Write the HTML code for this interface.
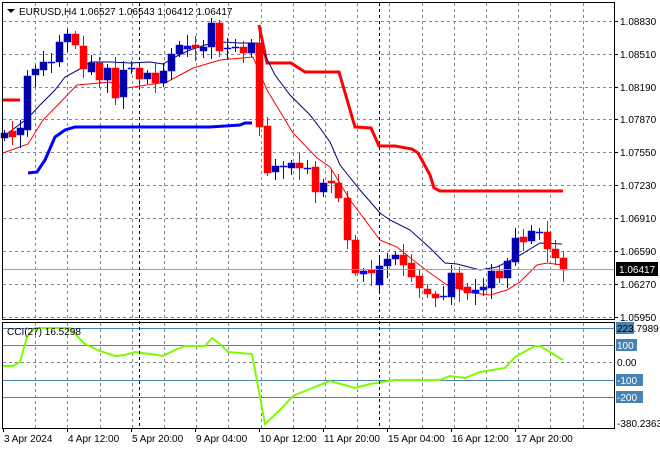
<!DOCTYPE html>
<html><head><meta charset="utf-8"><style>
html,body{margin:0;padding:0;background:#fff;width:660px;height:450px;overflow:hidden}
svg{display:block;font-family:"Liberation Sans",sans-serif}
</style></head><body>
<svg id="s" width="660" height="450" xmlns="http://www.w3.org/2000/svg">
<rect width="660" height="450" fill="#fff"/>
<g id="grid" stroke="#7a8896" stroke-dasharray="3,3" stroke-width="1"></g>
<g id="cci" fill="none"></g>
<g id="ind" fill="none"></g>
<g id="cand"></g>
<line x1="3" y1="269.5" x2="614" y2="269.5" stroke="#a0a0a0"/>
<line x1="139.5" y1="3" x2="139.5" y2="428" stroke="#000" stroke-dasharray="3,3"/>
<line x1="379.5" y1="3" x2="379.5" y2="428" stroke="#000" stroke-dasharray="3,3"/>
<rect x="2.5" y="2.5" width="612" height="317" fill="none" stroke="#000"/>
<rect x="2.5" y="322.5" width="612" height="106" fill="none" stroke="#000"/>
<g id="lab" font-size="10" fill="#000"></g>
<polygon points="7,9 15,9 11,13" fill="#000"/>
<text x="19" y="15" font-size="10">EURUSD,H4  1.06527 1.06543 1.06412 1.06417</text>
<text x="7" y="335" font-size="10">CCI(27) 16.5298</text>
</svg>
<script>
var NS="http://www.w3.org/2000/svg";
function el(p,t,a,txt){var e=document.createElementNS(NS,t);for(var k in a)e.setAttribute(k,a[k]);if(txt!=null)e.textContent=txt;document.getElementById(p).appendChild(e);return e;}
var ys=[21,54,87,119,152,185,218,251,284,317];
ys.forEach(function(y){el('grid','line',{x1:3,y1:y+.5,x2:614,y2:y+.5});});
for(var k=1;k<19;k++){var x=Math.round(3+32.2*k)+.5;el('grid','line',{x1:x,y1:3,x2:x,y2:320});el('grid','line',{x1:x,y1:323,x2:x,y2:428});}
el('grid','line',{x1:3,y1:362.5,x2:614,y2:362.5});
[328,345,380,397].forEach(function(y){el('cci','line',{x1:3,y1:y+.5,x2:614,y2:y+.5,stroke:'#4682b4'});});
function pl(g,pts,c,w){el(g,'polyline',{points:pts,stroke:c,'stroke-width':w,fill:'none'});}
pl('cci',"3,366 13,366 20,362 27,337 35,328 70,328 78,337 85,344 100,351 115,356 125,355 135,352 150,354 163,356 175,350 185,346 205,346 212,338 220,344 228,352 240,353 252,354 265,424 280,410 293,396 300,393 330,381 355,388 370,384 395,380 440,380 450,376 465,378 480,372 505,368 515,357 535,346 540,346 563,360","#7cfc00",2);
pl('ind',"3,100 20,100","#ff0000",3);
pl('ind',"259,25 267,63 291,63 305,72 339,72 355,127 371,128 379,146 395,146 412,149 418,153 423,162 430,175 434,188 440,191 563,191","#ff0000",3);
pl('ind',"28,173 37,172 45,160 55,137 65,130 75,127 210,127 240,125 245,123 252,123","#0000ff",3);
pl('ind',"3,137 28,118 40,105 55,90 65,77 80,69 90,62 110,62 130,63 150,62 163,64 175,57 190,50 205,45 220,42 240,43 258,43 265,55 275,75 290,95 310,115 320,128 330,142 340,165 360,190 380,213 390,220 410,230 430,248 445,263 457,264 480,270 497,267 517,257 540,243 562,244","#000080",1);
pl('ind',"3,153 28,144 43,120 77,85 110,82 127,88 167,82 193,68 220,60 253,57 267,90 293,133 317,158 330,167 350,200 380,240 397,247 413,260 430,273 447,285 473,293 490,295 507,290 520,282 537,265 547,263 562,265","#ff0000",1);
var C=[[4,138,133],[12,131,137],[20,135,128],[27,130,76],[35,75,69],[43,70,62],[51,62,62],[59,62,42],[67,42,34],[75,34,45],[83,46,69],[91,72,63],[99,63,80],[107,80,68],[115,68,98],[123,97,70],[131,68,68],[139,68,79],[147,79,73],[155,73,83],[163,83,71],[171,71,54],[179,54,45],[187,49,46],[195,45,48],[203,51,47],[211,47,23],[219,23,51],[227,48,48],[235,47,47],[243,47,53],[251,53,43],[259,43,127],[267,126,173],[275,172,166],[283,166,166],[291,168,163],[299,163,168],[307,168,168],[315,167,192],[323,192,183],[331,181,183],[338,183,198],[347,198,240],[355,240,273],[363,274,271],[371,270,273],[379,285,266],[387,266,259],[395,259,255],[403,255,265],[411,263,277],[419,276,288],[427,289,294],[435,294,298],[443,297,296],[451,297,273],[459,273,289],[467,287,293],[475,293,290],[483,290,287],[491,288,271],[499,271,278],[507,278,261],[515,262,238],[523,237,242],[531,241,231],[539,232,232],[547,232,249],[555,249,258],[563,258,270]];
C.forEach(function(c,i){var x=c[0],o=c[1],cl=c[2];var up=cl<=o;var col=up?'#0000a0':'#ff0000';if(up&&Math.abs(o-cl)<4)col='#0000ff';
var top=Math.min(o,cl),bot=Math.max(o,cl);var h=(i*7)%9+3,l=(i*5)%11+3;
el('cand','line',{x1:x+.5,y1:top-h,x2:x+.5,y2:bot+l,stroke:col});
el('cand','rect',{x:x-3,y:top,width:7,height:Math.max(1,bot-top),fill:up&&Math.abs(o-cl)>=4?'#0000a0':col,stroke:up?'#0000ff':'#ff0000','stroke-width':0.5});});
var pr=["1.08830","1.08510","1.08190","1.07870","1.07550","1.07230","1.06910","1.06590","1.06270","1.05950"];
ys.forEach(function(y,i){el('lab','line',{x1:614,y1:y+.5,x2:618,y2:y+.5,stroke:'#000'});el('lab','text',{x:620,y:y+4},pr[i]);});
el('lab','rect',{x:616,y:262,width:42,height:14,fill:'#000'});
el('lab','text',{x:619,y:273,fill:'#fff'},"1.06417");
[[328,"223.7989",0],[345,"100",1],[362,"0.00",0],[380,"-100",1],[397,"-200",1],[423,"-380.2363",0]].forEach(function(a){if(a[2])el('lab','rect',{x:616,y:a[0]-6,width:a[1].length*6+3,height:12,fill:'#4682b4'});if(a[1]=="223.7989")el('lab','rect',{x:616,y:a[0]-6,width:18,height:12,fill:'#4682b4'});el('lab','text',{x:617,y:a[0]+4,fill:a[2]?'#fff':'#000'},a[1]);});
[[3,"3 Apr 2024"],[67,"4 Apr 12:00"],[131,"5 Apr 20:00"],[195,"9 Apr 04:00"],[259,"10 Apr 12:00"],[323,"11 Apr 20:00"],[387,"15 Apr 04:00"],[451,"16 Apr 12:00"],[515,"17 Apr 20:00"]].forEach(function(a){el('lab','line',{x1:a[0]+.5,y1:428,x2:a[0]+.5,y2:432,stroke:'#000'});el('lab','text',{x:a[0]+1,y:442},a[1]);});
</script>
</body></html>
